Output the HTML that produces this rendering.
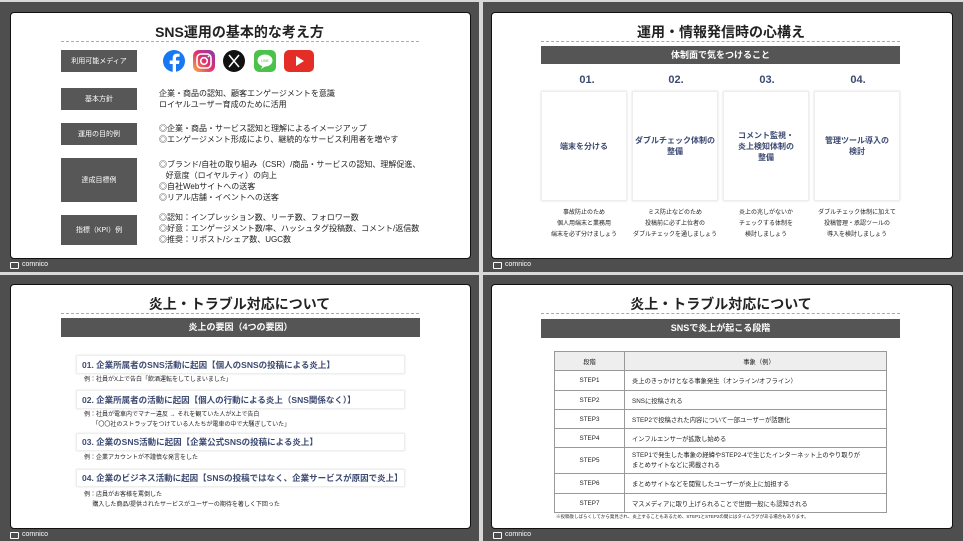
<!DOCTYPE html>
<html><head><meta charset="utf-8"><style>
*{margin:0;padding:0;box-sizing:border-box}
body{width:963px;height:541px;background:#d8d8d8;position:relative;overflow:hidden;font-family:"Liberation Sans","Noto Sans CJK JP",sans-serif;color:#222}
.p{position:absolute;background:#4e4e4e}
.in{position:absolute;background:#fff;border:1.5px solid #111;border-radius:4px}
.a{position:absolute;white-space:nowrap}
.logo{position:absolute;left:10px;bottom:3px;color:#fff;font-size:7px;line-height:8px;display:flex;align-items:center;gap:3px}
.logo i{display:inline-block;width:9px;height:7px;border:1.5px solid #fff;border-radius:1px}
.t{position:absolute;left:0;width:100%;text-align:center;font-size:14px;line-height:16px;font-weight:bold;color:#222}
.dash{position:absolute;border-top:1px dashed #aaa}
.bar{position:absolute;background:#555;color:#fff;font-weight:bold;font-size:9px;text-align:center}
.lb{position:absolute;left:61px;width:76px;background:#575757;color:#fff;font-size:7px;display:flex;align-items:center;justify-content:center}
.tx{position:absolute;left:159px;font-size:8px;line-height:11px;white-space:nowrap}
.num{position:absolute;font-size:11px;line-height:14px;font-weight:bold;color:#3c4a72;text-align:center;width:86px}
.card{position:absolute;top:91px;height:110px;width:86px;border:1px solid #eee;box-shadow:0 0 2px #ddd;display:flex;align-items:center;justify-content:center;text-align:center;font-size:8px;font-weight:bold;color:#3c4a72;line-height:11px;white-space:nowrap}
.desc{position:absolute;top:208px;width:96px;text-align:center;font-size:6px;line-height:11px;white-space:nowrap}
.ib{position:absolute;left:76px;width:329px;border:1px solid #eee;box-shadow:0 0 2px #e4e4e4;font-size:8.5px;font-weight:bold;color:#3c4a72;padding-left:5px;display:flex;align-items:center;white-space:nowrap}
.ex{position:absolute;left:84px;font-size:6px;line-height:10px;white-space:nowrap}
table{position:absolute;left:554px;top:351px;width:333px;border-collapse:collapse;font-size:6.3px}
td{border:1px solid #999;height:19px;padding-left:7px;white-space:nowrap}
td:first-child{width:70px;text-align:center;padding:0}
</style></head><body>

<!-- Panel 1 -->
<div class="p" style="left:0;top:2px;width:479px;height:270px">
<div class="in" style="left:10px;top:10px;width:461px;height:247px"></div>
<div class="logo"><i></i>comnico</div></div>
<div class="t" style="left:0;width:479px;top:24px">SNS運用の基本的な考え方</div>
<div class="dash" style="left:61px;top:41px;width:358px"></div>
<div class="lb" style="top:50px;height:22px">利用可能メディア</div>
<div class="lb" style="top:88px;height:22px">基本方針</div>
<div class="lb" style="top:123px;height:22px">運用の目的例</div>
<div class="lb" style="top:158px;height:44px">達成目標例</div>
<div class="lb" style="top:215px;height:30px">指標（KPI）例</div>
<svg class="a" style="left:150px;top:48px" width="170" height="28" viewBox="150 48 170 28">
<circle cx="174" cy="61" r="11" fill="#1877f2"/><path d="M176 73v-9h3l.5-3.5H176v-2c0-1 .4-1.7 1.8-1.7h1.8v-3a20 20 0 0 0-2.6-.2c-2.6 0-4.3 1.600-4.3 4.5v2.4h-3V64h3v9z" fill="#fff"/>
<defs><linearGradient id="ig" x1="0" y1="1" x2="1" y2="0"><stop offset="0" stop-color="#fcb045"/><stop offset=".5" stop-color="#e1306c"/><stop offset="1" stop-color="#833ab4"/></linearGradient></defs>
<rect x="193" y="50" width="22" height="22" rx="6" fill="url(#ig)"/><rect x="197" y="54" width="14" height="14" rx="4" fill="none" stroke="#fff" stroke-width="1.6"/><circle cx="204" cy="61" r="3.3" fill="none" stroke="#fff" stroke-width="1.6"/><circle cx="208.5" cy="56.5" r=".9" fill="#fff"/>
<circle cx="234" cy="61" r="11" fill="#111"/><path d="M229 55l10 12M239 55l-10 12" stroke="#fff" stroke-width="1.5"/>
<rect x="254" y="50" width="22" height="22" rx="5" fill="#4cc24a"/><ellipse cx="265" cy="60.5" rx="7.5" ry="6" fill="#fff"/><path d="M263 65l-2 4 5-3z" fill="#fff"/><text x="265" y="62" font-size="3.5" text-anchor="middle" fill="#4cc24a" font-family="Liberation Sans">LINE</text>
<rect x="284" y="50" width="30" height="22" rx="5" fill="#e52d27"/><path d="M296 56v10l8-5z" fill="#fff"/>
</svg>
<div class="tx" style="top:88px">企業・商品の認知、顧客エンゲージメントを意識<br>ロイヤルユーザー育成のために活用</div>
<div class="tx" style="top:123px">◎企業・商品・サービス認知と理解によるイメージアップ<br>◎エンゲージメント形成により、継続的なサービス利用者を増やす</div>
<div class="tx" style="top:159px">◎ブランド/自社の取り組み（CSR）/商品・サービスの認知、理解促進、<br>&nbsp;&nbsp;&nbsp;好意度（ロイヤルティ）の向上<br>◎自社Webサイトへの送客<br>◎リアル店舗・イベントへの送客</div>
<div class="tx" style="top:212px">◎認知：インプレッション数、リーチ数、フォロワー数<br>◎好意：エンゲージメント数/率、ハッシュタグ投稿数、コメント/返信数<br>◎推奨：リポスト/シェア数、UGC数</div>

<!-- Panel 2 -->
<div class="p" style="left:483px;top:2px;width:480px;height:270px">
<div class="in" style="left:8px;top:10px;width:462px;height:247px"></div>
<div class="logo"><i></i>comnico</div></div>
<div class="t" style="left:483px;width:476px;top:24px">運用・情報発信時の心構え</div>
<div class="dash" style="left:541px;top:41px;width:359px"></div>
<div class="bar" style="left:541px;top:46px;width:359px;height:18px;line-height:18px">体制面で気をつけること</div>
<div class="num" style="left:544px;top:73px">01.</div>
<div class="num" style="left:633px;top:73px">02.</div>
<div class="num" style="left:724px;top:73px">03.</div>
<div class="num" style="left:815px;top:73px">04.</div>
<div class="card" style="left:541px">端末を分ける</div>
<div class="card" style="left:632px">ダブルチェック体制の<br>整備</div>
<div class="card" style="left:723px">コメント監視・<br>炎上検知体制の<br>整備</div>
<div class="card" style="left:814px">管理ツール導入の<br>検討</div>
<div class="desc" style="left:536px">事故防止のため<br>個人用端末と業務用<br>端末を必ず分けましょう</div>
<div class="desc" style="left:627px">ミス防止などのため<br>投稿前に必ず上位者の<br>ダブルチェックを通しましょう</div>
<div class="desc" style="left:718px">炎上の兆しがないか<br>チェックする体制を<br>検討しましょう</div>
<div class="desc" style="left:809px">ダブルチェック体制に加えて<br>投稿管理・承認ツールの<br>導入を検討しましょう</div>

<!-- Panel 3 -->
<div class="p" style="left:0;top:275px;width:479px;height:266px">
<div class="in" style="left:10px;top:9px;width:461px;height:245px"></div>
<div class="logo" style="bottom:2px"><i></i>comnico</div></div>
<div class="t" style="left:0;width:479px;top:296px">炎上・トラブル対応について</div>
<div class="dash" style="left:61px;top:313px;width:358px"></div>
<div class="bar" style="left:61px;top:318px;width:359px;height:19px;line-height:19px">炎上の要因（4つの要因）</div>
<div class="ib" style="top:355px;height:19px">01.&nbsp;企業所属者のSNS活動に起因【個人のSNSの投稿による炎上】</div>
<div class="ex" style="top:375px">例：社員がX上で告白「飲酒運転をしてしまいました」</div>
<div class="ib" style="top:390px;height:19px">02.&nbsp;企業所属者の活動に起因【個人の行動による炎上（SNS関係なく）】</div>
<div class="ex" style="top:410px">例：社員が電車内でマナー違反 → それを観ていた人がX上で告白<br>&nbsp;&nbsp;&nbsp;&nbsp;&nbsp;「〇〇社のストラップをつけている人たちが電車の中で大騒ぎしていた」</div>
<div class="ib" style="top:433px;height:18px">03.&nbsp;企業のSNS活動に起因【企業公式SNSの投稿による炎上】</div>
<div class="ex" style="top:453px">例：企業アカウントが不謹慎な発言をした</div>
<div class="ib" style="top:469px;height:18px">04.&nbsp;企業のビジネス活動に起因【SNSの投稿ではなく、企業サービスが原因で炎上】</div>
<div class="ex" style="top:490px">例：店員がお客様を罵倒した<br>&nbsp;&nbsp;&nbsp;&nbsp;&nbsp;購入した商品/提供されたサービスがユーザーの期待を著しく下回った</div>

<!-- Panel 4 -->
<div class="p" style="left:483px;top:275px;width:480px;height:266px">
<div class="in" style="left:8px;top:9px;width:462px;height:245px"></div>
<div class="logo" style="bottom:2px"><i></i>comnico</div></div>
<div class="t" style="left:483px;width:476px;top:296px">炎上・トラブル対応について</div>
<div class="dash" style="left:541px;top:313px;width:359px"></div>
<div class="bar" style="left:541px;top:319px;width:359px;height:19px;line-height:19px">SNSで炎上が起こる段階</div>
<table>
<tr style="background:#eee"><td style="height:16px">段階</td><td style="text-align:center">事象（例）</td></tr>
<tr><td style="height:20px">STEP1</td><td>炎上のきっかけとなる事象発生（オンライン/オフライン）</td></tr>
<tr><td>STEP2</td><td>SNSに投稿される</td></tr>
<tr><td>STEP3</td><td>STEP2で投稿された内容について一部ユーザーが話題化</td></tr>
<tr><td>STEP4</td><td>インフルエンサーが拡散し始める</td></tr>
<tr><td style="height:26px">STEP5</td><td style="line-height:10px">STEP1で発生した事象の経緯やSTEP2-4で生じたインターネット上のやり取りが<br>まとめサイトなどに掲載される</td></tr>
<tr><td style="height:20px">STEP6</td><td>まとめサイトなどを閲覧したユーザーが炎上に加担する</td></tr>
<tr><td style="height:18px">STEP7</td><td>マスメディアに取り上げられることで世間一般にも認知される</td></tr>
</table>
<div class="a" style="left:556px;top:514px;font-size:4.5px">※投稿後しばらくしてから発見され、炎上することもあるため、STEP1とSTEP2の間にはタイムラグがある場合もあります。</div>
</body></html>
